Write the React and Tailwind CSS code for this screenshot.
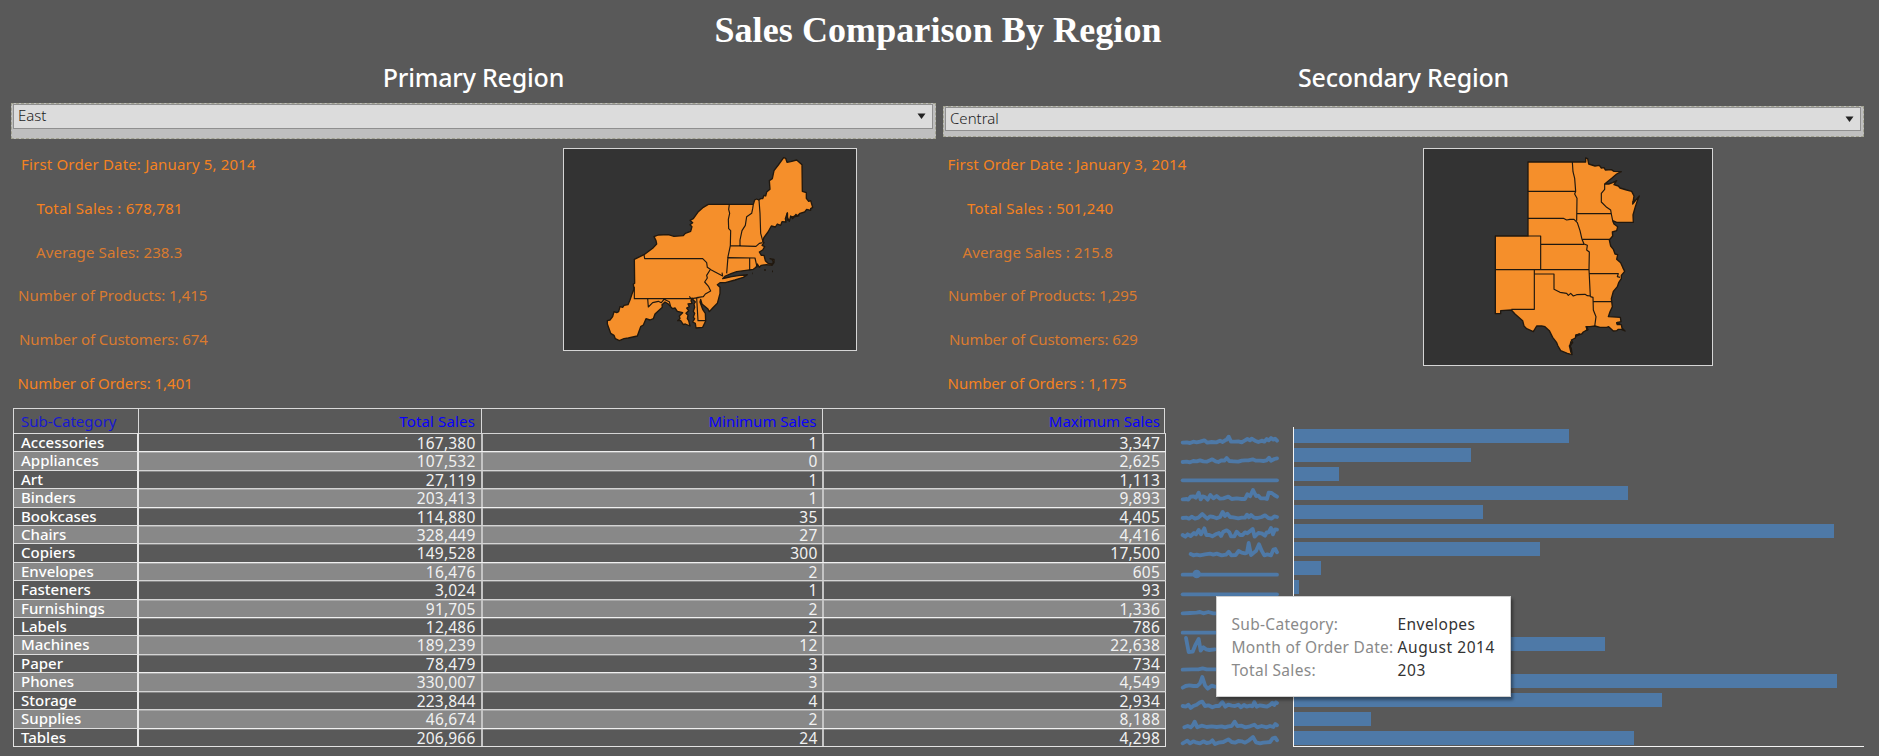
import React from "react";

const crisp = "text-[#f5821f] tracking-[0.18px]";
const soft = "text-[#d97b2f] tracking-[0.01px]";

const eastStats = [
  { text: "First Order Date: January 5, 2014", cls: `${crisp} pl-[10px]` },
  { text: "Total Sales : 678,781", cls: "text-[#f5821f] tracking-[0.23px] pl-[25.5px]" },
  { text: "Average Sales: 238.3", cls: "text-[#d97b2f] tracking-[0.12px] pl-[25px]" },
  { text: "Number of Products: 1,415", cls: `${soft} pl-[7px]` },
  { text: "Number of Customers: 674", cls: "text-[#d97b2f] tracking-[-0.08px] pl-[8px]" },
  { text: "Number of Orders: 1,401", cls: "text-[#f5821f] tracking-[-0.01px] pl-[6.5px]" },
];

const centralStats = [
  { text: "First Order Date : January 3, 2014", cls: `${crisp} pl-[4.5px]` },
  { text: "Total Sales : 501,240", cls: "text-[#f5821f] tracking-[0.23px] pl-[24px]" },
  { text: "Average Sales : 215.8", cls: "text-[#d97b2f] tracking-[0.12px] pl-[19.5px]" },
  { text: "Number of Products: 1,295", cls: `${soft} pl-[5px]` },
  { text: "Number of Customers: 629", cls: "text-[#d97b2f] tracking-[-0.08px] pl-[6px]" },
  { text: "Number of Orders : 1,175", cls: "text-[#f5821f] tracking-[-0.02px] pl-[4.5px]" },
];

const rows = [
  ["Accessories", 167380, 1, 3347],
  ["Appliances", 107532, 0, 2625],
  ["Art", 27119, 1, 1113],
  ["Binders", 203413, 1, 9893],
  ["Bookcases", 114880, 35, 4405],
  ["Chairs", 328449, 27, 4416],
  ["Copiers", 149528, 300, 17500],
  ["Envelopes", 16476, 2, 605],
  ["Fasteners", 3024, 1, 93],
  ["Furnishings", 91705, 2, 1336],
  ["Labels", 12486, 2, 786],
  ["Machines", 189239, 12, 22638],
  ["Paper", 78479, 3, 734],
  ["Phones", 330007, 3, 4549],
  ["Storage", 223844, 4, 2934],
  ["Supplies", 46674, 2, 8188],
  ["Tables", 206966, 24, 4298],
];

const fmt = (n) => n.toLocaleString("en-US");

function Select({ value, frame, inner }) {
  return (
    <div className={`${frame} border border-dashed border-[#a3a392] bg-[#bfbfbf] pl-px`}>
      <div className={`${inner} flex justify-between border border-[#8f8f8f] bg-[#dcdcdc] pl-[4px] pr-[6.5px]`}>
        <span className="text-[15px] font-light leading-[21px] text-[#1c1c1c]">{value}</span>
        <svg className="mt-[8px]" width="9" height="6" viewBox="0 0 9 6">
          <path d="M0.5 0.5H8.5L4.5 6Z" fill="#222" />
        </svg>
      </div>
    </div>
  );
}

function Stats({ items, className }) {
  return (
    <div className={`${className} flex flex-col text-[15px]`}>
      {items.map((s) => (
        <div key={s.text} className={`${s.cls} h-[43.75px] whitespace-nowrap leading-[43.75px]`}>
          {s.text}
        </div>
      ))}
    </div>
  );
}

function EastMap() {
  return (
    <svg className="block h-full w-full" viewBox="72 57 876 603" preserveAspectRatio="none" fill="none" stroke="#20180f" strokeWidth="4" strokeLinejoin="round">
      <path
        fill="#f58f2b"
        d="M505 223H640L644 210 650 207 656 210 662 206 668 206 672 196 677 198 680 186 690 178 688 152 697 146 702 122 715 105 731 83 737 85 741 97 752 95 770 90 786 104 787 184 799 188 799 205 806 214 812 212 818 232 812 236 812 241 800 238 794 246 780 250 772 258 768 253 758 266 752 258 748 274 742 262 742 248 736 266 738 276 726 275 722 286 712 282 706 291 694 288 684 306 672 322 668 334 672 338 666 346 674 350 668 360 658 366 664 376 672 376 676 392 684 400 696 402 700 396 696 388 690 386 702 388 702 398 696 406 680 404 664 406 658 412 652 402 648 412 640 418 618 421 590 425 575 430 556 438 548 446 556 444 575 440 600 436 622 434 610 442 585 450 556 458 540 458 532 464 540 472 540 490 532 520 518 534 508 545 503 536 486 522 482 508 480 516 488 538 496 550 497 573 488 592 468 594 466 580 458 576 464 566 460 562 464 550 460 544 464 532 462 522 466 516 460 510 456 504 453 512 456 520 444 522 448 530 440 534 446 542 438 550 444 556 442 566 446 572 450 588 436 582 430 584 422 572 413 572 420 566 418 558 428 548 412 544 405 534 398 536 392 530 385 522 375 516 366 524 367 532 358 540 345 552 340 566 330 570 318 566 310 585 302 590 292 618 265 624 252 626 238 632 226 626 222 616 212 610 202 582 202 572 210 570 218 560 222 545 230 548 236 545 240 530 248 532 252 526 264 524 270 510 276 492 282 478 280 462 284 460 283 388 312 374 340 353 350 342 348 332 342 320 355 315 385 314 402 319 430 317 436 310 452 304 456 290 450 284 458 278 450 271 460 266 475 245 490 232Z"
      />
      <path
        strokeWidth="3.5"
        d="M568 223L566 238 569 250 565 268 566 296 572 302 571 347 564 380 560 430M640 223L638 236 635 250 620 260 616 286 606 302 600 330 600 347M657 210L660 250 662 310 668 332M570 347 648 349 658 340 668 338M562 383 645 384 650 406M629 384V421M312 374L314 386H488L500 398 502 412 514 420 548 438 546 428M510 420L500 436 502 444 494 456 506 470 512 483 496 492 490 500 470 503M283 470V506H455L480 502M470 503L474 572H498M323 506L325 531 338 518 355 514 364 518 372 508 388 515 392 530M448 499L456 510"
      />
      <path strokeWidth="5" d="M672 420H678M696 424H699M636 430H638M652 404L650 412M742 250L742 272M752 262L778 256" />
    </svg>
  );
}

function CentralMap() {
  return (
    <svg className="block h-full w-full" viewBox="72 57 864 648" preserveAspectRatio="none" fill="none" stroke="#20180f" strokeWidth="4" strokeLinejoin="round">
      <path
        fill="#f58f2b"
        d="M384 96H557L557 84 563 86 566 102 585 108 598 106 604 114 612 113 616 120 634 119 642 124 664 125 650 132 636 144 614 162 626 162 638 158 650 152 642 164 655 168 660 174 680 180 695 184 702 198 698 222 706 212 718 198 712 212 706 230 699 255 700 277H650L638 272 642 282 653 290 650 302 637 306 638 318 628 330 632 348 640 358 645 372 653 374 650 388 662 398 668 412 674 424 664 436 664 446 656 458 652 470 640 484 634 506 637 530 630 545 625 560 661 562 663 575 650 578 652 584 664 584 666 594 675 603 664 598 655 598 650 602 640 603 626 590 620 592 600 592 585 588 570 590 558 590 564 598 550 606 545 612 528 615 526 624 514 630 518 638 508 648 514 655 516 674 502 670 482 662 474 648 470 638 458 622 448 602 435 590 425 588 410 588 400 605 380 596 372 588 368 572 345 552 334 540 302 542V551H286V318H384Z"
      />
      <path
        strokeWidth="3.5"
        d="M384 184H527M517 96L519 125 524 145 527 184 524 192 531 205 530 272M384 265H490L500 270 510 268 522 268 532 278 540 302 546 328 552 342 562 346 560 360 568 366 567 418 571 500M530 251H634M614 162L614 178 604 190 604 216 620 232 632 240 634 252 638 272M548 328H630M384 318H422V418M422 343H552M286 419H567M568 431H655L652 440 660 442M571 500L579 502 580 540 588 560 584 590M579 515H636M403 419V538H334M403 432H462V478L480 487 500 490 505 496 512 490 520 498 530 494 555 493 562 497 571 498"
      />
      <path strokeWidth="6" d="M514 634L510 650 514 668M650 578L660 582M560 590L562 602M526 618L540 612M698 218L706 210" />
    </svg>
  );
}

function DataTable() {
  return (
    <div className="flex w-[1153px] flex-col text-[15px]">
      <div className="flex h-[25px] w-[1152px] border-l border-t border-[#d9d9d9] text-right leading-[25px]">
        <div className="w-[125px] border-r border-[#d9d9d9] pl-[7px] text-left text-[#1818d0]">Sub-Category</div>
        <div className="w-[343px] border-r border-[#d9d9d9] pr-[6px] tracking-[0.15px] text-[#0a00ff]">Total Sales</div>
        <div className="w-[341px] border-r border-[#d9d9d9] pr-[5.5px] text-[#0a00ff]">Minimum Sales</div>
        <div className="grow border-r border-[#d9d9d9] pr-[4px] text-[#0a00ff]">Maximum Sales</div>
      </div>
      <div className="flex flex-col border-b border-l border-[#e3e3e3]">
        {rows.map(([name, total, min, max], i) => (
          <div
            key={name}
            className={`flex h-[18.41px] text-right leading-[18px] text-[#f1f1f1] ${i % 2 ? "bg-[#888888]" : ""}`}
          >
            <div className="w-[125px] border-r-2 border-t border-r-[#e8e8e8] border-t-[#dedede] pl-[7px] text-left font-medium leading-[17px] text-white">
              {name}
            </div>
            <div className={`flex grow border-t text-[15.5px] leading-[18.6px] tracking-[0.2px] ${i % 3 === 1 ? "border-[#f0f0f0]" : "border-[#d4d4d4]"} ${i ? "shadow-[inset_0_1px_0_rgba(255,255,255,0.28)]" : ""}`}>
              <div className="w-[344px] border-r-2 border-[#c4c4c4] pr-[5.5px]">{fmt(total)}</div>
              <div className="w-[341px] border-r-2 border-[#c4c4c4] pr-[4.5px]">{fmt(min)}</div>
              <div className="grow border-r border-[#e3e3e3] pr-[5px]">{fmt(max)}</div>
            </div>
          </div>
        ))}
      </div>
    </div>
  );
}

function Sparklines() {
  return (
    <svg className="mt-[19px] block h-[320px] w-[100px]" viewBox="90 81 300 960" fill="none" stroke="#4e79a7" strokeWidth="11.5" strokeLinecap="round" strokeLinejoin="round">
      <g transform="translate(60 75)">
        <path d="M38 53L50 52 60 54 70 50 80 52 90 50 103 46 112 53 125 51 140 52 150 47 158 51 165 46 170 44 176 35 183 50 195 50 205 49 215 52 225 46 232 42 240 46 245 41 255 47 265 51 275 47 283 50 290 42 296 46 303 39 310 44 315 41 321 47" />
        <path d="M38 111L50 110 60 112 70 108 80 109 90 106 100 109 110 110 120 106 127 103 137 109 145 111 155 106 163 107 170 99 178 108 190 109 205 110 215 107 225 106 235 106 248 103 258 107 270 107 280 108 290 106 297 98 303 107 313 102 321 100" />
        <path d="M38 166H321" />
        <path d="M38 223L50 222 55 224 62 215 70 214 78 218 86 203 92 223 98 214 105 216 113 224 121 210 130 220 140 213 150 221 160 220 175 215 185 222 200 220 215 222 225 222 232 208 240 214 249 195 258 213 265 212 272 220 285 220 291 222 296 203 305 204 313 210 321 215" />
        <path d="M38 279L50 278 57 281 65 275 75 281 85 278 97 267 105 275 112 281 120 274 130 276 140 280 150 276 158 261 165 273 172 266 180 276 190 277 205 280 215 278 225 278 231 269 237 277 243 270 252 278 262 279 275 276 285 271 295 279 305 281 313 274 321 276" />
        <path d="M38 330L46 335 53 328 62 333 72 324 78 328 86 315 93 328 103 310 109 330 118 330 127 334 137 328 147 324 153 333 160 320 170 316 178 322 183 334 193 334 200 320 210 330 218 330 225 322 232 325 248 312 254 335 265 324 275 325 285 332 290 322 296 322 303 309 309 328 315 313 321 314" />
        <path d="M62 387L70 391 80 389 90 391 105 388 120 386 130 389 140 386 155 391 168 389 176 380 184 391 197 390 206 378 215 383 225 385 231 383 236 354 243 390 250 384 258 378 267 358 275 377 283 391 292 388 303 391 310 374 316 372 321 382" />
        <path d="M38 449H321" />
        <circle cx="80" cy="447" r="7" fill="#4e79a7" />
        <path d="M38 508H321" />
      </g>
      <path d="M98 640L120 639 140 638 150 636 160 640 175 636 190 640H381M98 698H381" />
      <path d="M108 714L116 756 128 755 137 733 146 717 152 752 160 742 168 748 178 750 195 748" />
      <path d="M98 809L125 808 145 808 158 805 170 808H381" />
      <path d="M98 863L107 858 118 856 130 858 142 858 150 850 157 831 165 856 173 866 185 857 195 860" />
      <path d="M98 918L108 920 115 914 122 924 130 918 140 914 148 908 157 905 165 918 175 916 187 922 197 918 207 918 217 906 226 920 235 914 245 917 255 918 265 914 273 922 282 915 290 920 300 917 307 919 313 906 320 920 330 916 340 918 350 920 360 915 367 908 373 915 378 907 381 909" />
      <path d="M103 982L113 978 122 982 128 976 134 965 142 982 155 977 170 981 185 979 200 981 215 979 225 982 235 979 245 978 254 965 262 978 275 977 285 982 300 979 313 974 322 982 335 978 350 982 360 978 370 981 376 972 381 976" />
      <path d="M98 1030L107 1025 112 1022 120 1030 130 1024 140 1028 150 1030 160 1024 170 1029 180 1027 187 1021 195 1032 205 1028 220 1026 235 1018 245 1026 255 1028 265 1023 275 1024 285 1028 297 1021 309 1011 318 1027 330 1030 340 1028 350 1027 360 1026 368 1015 376 1013 381 1021" />
    </svg>
  );
}

function BarChart() {
  return (
    <div className="mt-[19px] flex h-[320px] w-[571px] flex-col overflow-hidden border-b border-l border-[#f5f5f5] pt-[2.3px]">
      {rows.map(([name, total]) => (
        <div key={name} className="h-[18.86px] shrink-0">
          <div className="h-[14px] bg-[#4e79a7]" style={{ width: total * 0.001644 }} />
        </div>
      ))}
    </div>
  );
}

function Tooltip() {
  return (
    <div className="absolute left-[1216px] top-[596px] grid h-[101px] w-[295px] grid-cols-[166px_1fr] content-start border border-[#cfcfcf] bg-white pl-[14.5px] pt-[16px] text-[15.5px] leading-[23px] shadow-[2px_3px_3px_rgba(0,0,0,0.4)]">
      <span className="tracking-[0.3px] text-[#8a8a8a]">Sub-Category:</span>
      <span className="tracking-[0.45px] text-[#333]">Envelopes</span>
      <span className="whitespace-nowrap tracking-[0.28px] text-[#8a8a8a]">Month of Order Date:</span>
      <span className="whitespace-nowrap tracking-[0.58px] text-[#333]">August 2014</span>
      <span className="tracking-[0.3px] text-[#8a8a8a]">Total Sales:</span>
      <span className="tracking-[0.6px] text-[#333]">203</span>
    </div>
  );
}

export default function App() {
  return (
    <div className="h-[756px] overflow-hidden bg-white font-['Noto_Sans',sans-serif]">
      <div className="relative flex h-[756px] w-[1879px] flex-col bg-[#595959]">
        <h1 className="h-[58px] pr-[3px] text-center font-['Liberation_Serif',serif] text-[36px] font-bold leading-[60px] tracking-[0.08px] text-white">
          Sales Comparison By Region
        </h1>

        <div className="flex h-[350px] gap-[7px] pl-[11px]">
          <section className="flex w-[925px] flex-col">
            <h2 className="h-[39px] text-center text-[25px] font-medium leading-[39px] tracking-[-0.2px] text-white">Primary Region</h2>
            <Select value="East" frame="mt-[6px] h-[36px]" inner="mr-[2px] h-[25px]" />
            <div className="flex">
              <Stats items={eastStats} className="w-[552px] pt-[4px]" />
              <div className="mt-[9px] h-[203px] w-[294px] border border-[#d6d6d6] bg-[#333333]">
                <EastMap />
              </div>
            </div>
          </section>
          <section className="flex w-[921px] flex-col">
            <h2 className="h-[39px] text-center text-[25px] font-medium leading-[39px] tracking-[-0.25px] text-white">Secondary Region</h2>
            <Select value="Central" frame="mt-[9px] h-[31px]" inner="mr-[2px] h-[24px]" />
            <div className="flex">
              <Stats items={centralStats} className="w-[480px] pt-[6px]" />
              <div className="mt-[11px] h-[218px] w-[290px] border border-[#d6d6d6] bg-[#333333]">
                <CentralMap />
              </div>
            </div>
          </section>
        </div>

        <div className="flex items-start pl-[13px]">
          <DataTable />
          <div className="ml-[14px]">
            <Sparklines />
          </div>
          <div className="ml-[13px]">
            <BarChart />
          </div>
        </div>

        <Tooltip />
      </div>
    </div>
  );
}
